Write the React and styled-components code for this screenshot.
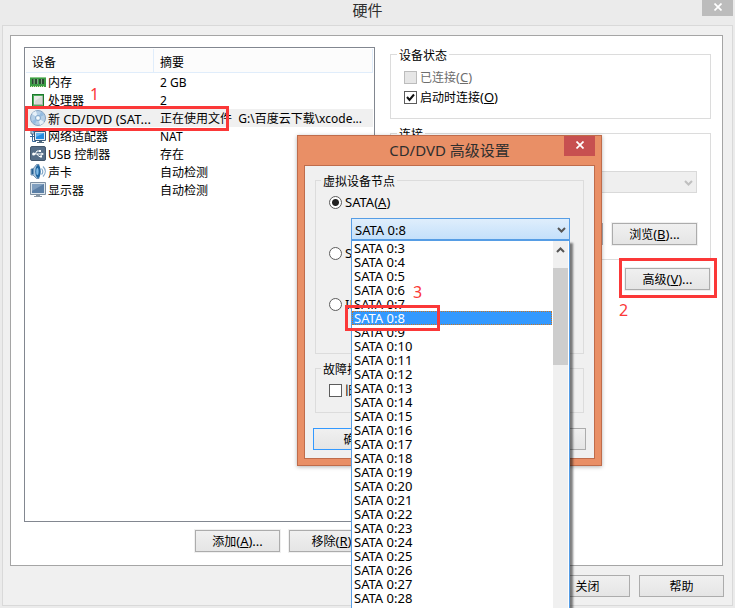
import React from "react";
import styled, { createGlobalStyle, css } from "styled-components";

const Global = createGlobalStyle`
  * { box-sizing: border-box; }
  html, body { margin: 0; background: #ebebeb; }
  body, button, input, select {
    font-family: "Noto Sans", "Noto Sans CJK SC", sans-serif;
    font-size: 12px;
    line-height: 16px;
    color: #000;
  }
`;

const Window = styled.main`
  position: relative;
  display: flex;
  flex-direction: column;
  height: 100vh;
  min-height: 560px;
  padding: 0 2px 2px;
  overflow: hidden;
  background: #ebebeb;
`;

const TitleBar = styled.header`
  position: relative;
  flex: none;
  display: flex;
  justify-content: center;
  height: ${(p) => (p.$accent ? 29 : 25)}px;

  h1, h2 {
    margin: 0;
    font-size: 15px;
    font-weight: 400;
    line-height: ${(p) => (p.$accent ? 29 : 21)}px;
    color: #2e2e2e;
  }
`;

const CloseButton = styled.button`
  position: absolute;
  top: 0;
  right: 0;
  display: flex;
  align-items: center;
  justify-content: center;
  width: 31px;
  height: ${(p) => (p.$accent ? 20 : 16)}px;
  padding: 0 0 2px;
  border: 0;
  background: ${(p) => (p.$accent ? "#c75050" : "#bcbcbc")};
`;

const Client = styled.div`
  flex: 1;
  display: flex;
  flex-direction: column;
  padding: 9px 8px 8px 7px;
  border: 1px solid #d9d9d9;
  background: #f0f0f0;
`;

const Panel = styled.section`
  flex: 1;
  display: grid;
  grid-template-columns: minmax(0, 351fr) minmax(0, 321fr);
  gap: 15px;
  margin-right: 1px;
  padding: 11px 11px 13px 13px;
  border: 1px solid #a5a5a5;
  background: #fff;
`;

const Column = styled.div`
  display: flex;
  flex-direction: column;
  min-width: 0;
`;

const DeviceList = styled.div`
  flex: 1;
  padding: 1px;
  border: 1px solid #828790;
  background: #fff;
`;

const DeviceTable = styled.table`
  width: 100%;
  table-layout: fixed;
  border-collapse: separate;
  border-spacing: 0;

  th {
    height: 24px;
    padding: 4px 6px 0;
    border-bottom: 1px solid #e0edfb;
    border-right: 1px solid #e0edfb;
    background: #fcfcfc;
    text-align: left;
    font-weight: 400;
  }
  th:first-child { width: 128px; }
  td {
    height: 18px;
    padding: 2px 0 0 6px;
    line-height: 16px;
    white-space: pre;
  }
  td:first-child { padding: 0 0 0 4px; }
`;

const DeviceRow = styled.tr`
  background: ${(p) => (p.$selected ? "#f0f0f0" : "transparent")};
`;

const DeviceName = styled.span`
  display: flex;
  gap: 2px;
  height: 18px;
  line-height: 20px;

  svg {
    flex: none;
    margin-top: 1px;
  }
`;

const Latin = styled.span`
  font-size: 13px;
`;

const ButtonRow = styled.div`
  flex: none;
  display: flex;
  justify-content: flex-end;
  gap: 9px;
  padding: ${(p) => p.$pad || "9px 0 0"};
`;

const Button = styled.button`
  flex: none;
  width: 85px;
  height: 22px;
  padding: 1px 0 0;
  border: 1px solid ${(p) => (p.$primary ? "#3399ff" : "#acacac")};
  background: linear-gradient(#f0f0f0, #e5e5e5);
  box-shadow: 0 0 0 1px #f0f0f0;
  line-height: 19px;
  white-space: nowrap;
`;

const Group = styled.fieldset`
  min-width: 0;
  margin: 0 ${(p) => p.$inset || 0}px ${(p) => p.$gap || 0}px;
  padding: 0;
  border: 1px solid #dcdcdc;

  legend {
    margin-left: ${(p) => (p.$inset ? 5 : 6)}px;
    padding: 2px 2px 0;
    line-height: 14px;
    height: 14px;
  }
`;

const GroupBody = styled.div`
  padding: ${(p) => p.$pad};
`;

const Option = styled.label`
  display: flex;
  align-items: center;
  gap: 3px;
  height: ${(p) => p.$height || 16}px;
  color: ${(p) => (p.$disabled ? "#6d6d6d" : "#000")};
  white-space: nowrap;
`;

const mark = css`
  appearance: none;
  flex: none;
  width: 13px;
  height: 13px;
  margin: 0;
  border: 1px solid #5c5c5c;
  background: #fff;
`;

const tick =
  "url(\"data:image/svg+xml,%3Csvg xmlns='http://www.w3.org/2000/svg' viewBox='0 0 11 11'%3E%3Cpath d='M2 5l2.5 3L9 2.5' fill='none' stroke='%23111' stroke-width='2'/%3E%3C/svg%3E\")";

const Check = styled.input.attrs({ type: "checkbox" })`
  ${mark}
  &:checked { background: #fff ${tick}; }
  &:disabled { border-color: #bcbcbc; background: #e6e6e6; }
`;

const Radio = styled.input.attrs({ type: "radio" })`
  ${mark}
  border-radius: 50%;
  &:checked { background: radial-gradient(circle, #222 0 3px, #fff 4px); }
`;

const ComboBox = styled.div`
  position: relative;
  height: 22px;
  margin: ${(p) => p.$margin || 0};

  select {
    appearance: none;
    display: block;
    width: 100%;
    height: 22px;
    padding: 1px 3px 0;
    border: 1px solid ${(p) => (p.$open ? "#569de5" : "#d9d9d9")};
    border-radius: 0;
    background: ${(p) => (p.$open ? "linear-gradient(#dfeefc, #c4e0fb)" : "#efefef")};
    color: #000;
    font-size: 13px;
    opacity: 1;
  }
  > svg {
    position: absolute;
    right: 4px;
    top: 9px;
    pointer-events: none;
  }
`;

const FileRow = styled.div`
  display: flex;
  gap: 9px;
  margin-top: 30px;
`;

const PathInput = styled.input`
  flex: 1;
  min-width: 0;
  height: 22px;
  border: 1px solid #abadb3;
  background: #fff;
`;

const Dialog = styled.section`
  position: absolute;
  top: 135px;
  left: 297px;
  width: 305px;
  padding: 0 6px 6px;
  border: 1px solid #bf6c4b;
  background: #e98f66;
  box-shadow: 0 1px 4px rgba(0, 0, 0, 0.3);
`;

const DialogBody = styled.div`
  padding: 7px 8px 8px;
  border: 1px solid #bf6c4b;
  background: #f0f0f0;
`;

const DropDown = styled.div`
  position: absolute;
  z-index: 1;
  top: 22px;
  left: 0;
  right: 0;
  display: flex;
  border: 1px solid #569de5;
  background: #fff;
  box-shadow: 3px 3px 2px rgba(0, 0, 0, 0.5);
`;

const Choices = styled.ul`
  flex: 1;
  margin: 0;
  padding: 0 1px 30px 0;
  list-style: none;
`;

const Choice = styled.li`
  height: 14px;
  padding-left: 2px;
  font-size: 13px;
  line-height: 15px;
  ${(p) =>
    p.$active &&
    css`
      background: #3399ff;
      color: #fff;
      outline: 1px dotted #c77526;
      outline-offset: -1px;
    `}
`;

const ScrollTrack = styled.div`
  display: flex;
  flex-direction: column;
  align-items: center;
  width: 15px;
  margin-right: 1px;
  padding-top: 6px;
  background: #f0f0f0;
`;

const ScrollThumb = styled.div`
  width: 100%;
  height: 97px;
  margin-top: 15px;
  background: #cdcdcd;
`;

const Highlight = styled.div`
  position: absolute;
  z-index: 2;
  top: ${(p) => p.$top}px;
  left: ${(p) => p.$left}px;
  width: ${(p) => p.$width}px;
  height: ${(p) => p.$height}px;
  border: 3px solid #fb3838;
  pointer-events: none;
`;

const StepNumber = styled.span`
  position: absolute;
  z-index: 2;
  top: ${(p) => p.$top}px;
  left: ${(p) => p.$left}px;
  font-size: 16px;
  line-height: 20px;
  color: #fb3838;
`;

const Cross = () => (
  <svg width="8" height="8" viewBox="0 0 8 8" aria-hidden="true">
    <path d="M.5.5l7 7M7.5.5l-7 7" stroke="#fff" strokeWidth="1.7" />
  </svg>
);

const Chevron = ({ up, color = "#555" }) => (
  <svg width="9" height="6" viewBox="0 0 9 6" aria-hidden="true">
    <path d={up ? "M1 5l3.5-3.5L8 5" : "M1 1l3.5 3.5L8 1"} fill="none" stroke={color} strokeWidth="2" />
  </svg>
);

const Icon = ({ children }) => (
  <svg width="16" height="16" viewBox="0 0 16 16" aria-hidden="true">
    {children}
  </svg>
);

const MemoryIcon = () => (
  <Icon>
    <path d="M0 3h16v10H0z" fill="#3c9d45" />
    <path d="M0 3h16v1H0z" fill="#8cc98c" />
    <path d="M2 5h2v5H2zM5 5h2v5H5zM9 5h2v5H9zM12 5h2v5h-2z" fill="#2c4a33" />
    <path d="M4 5v5M7.500 5v5M11.500 5v5" stroke="#82a585" />
    <path d="M1 12.500h14" stroke="#d5e8a8" strokeDasharray="1 1" />
  </Icon>
);

const CpuIcon = () => (
  <Icon>
    <path d="M2 2h12v13H2z" fill="#1d7a2e" />
    <path d="M3 3h10v11H3z" fill="#4fae5c" />
    <path d="M4 4h9v9H4z" fill="#a9b8ab" />
    <path d="M4 4h8v8H4z" fill="#e9ece9" />
    <path d="M5 9l7-5v8H5z" fill="#d6dbd6" />
  </Icon>
);

const DiscIcon = () => (
  <Icon>
    <circle cx="8" cy="8" r="7.5" fill="#b5cfe7" stroke="#86a2c0" />
    <path d="M8 8L2 4a7 7 0 0 1 4-3zM8 8l6 4a7 7 0 0 1-4 3z" fill="#e6f0f9" />
    <path d="M8 8l3-6a7 7 0 0 1 3 3zM8 8l-3 6a7 7 0 0 1-3-3z" fill="#94bbe0" />
    <circle cx="8" cy="8" r="2.6" fill="#dce9f4" stroke="#86a9cc" />
    <circle cx="8" cy="8" r="1" fill="#fff" />
  </Icon>
);

const NetworkIcon = () => (
  <Icon>
    <path d="M1 1h8v5H1z" fill="#dce7f0" stroke="#47627e" />
    <path d="M2.500 2.500h5v2h-5z" fill="#3b83c4" />
    <path d="M2.500 6v7.500H6M0 8.500h5" fill="none" stroke="#37679a" />
    <path d="M4.500 3.500h11v9h-11z" fill="#e2ecf5" stroke="#3c5876" />
    <path d="M6 5h8v6H6z" fill="#258ce0" />
    <path d="M6 5h8L6 9z" fill="#66b5f0" />
    <path d="M9 13h3v1h2v1H7v-1h2z" fill="#526a80" />
  </Icon>
);

const UsbIcon = () => (
  <Icon>
    <rect x=".5" y=".5" width="15" height="14" rx="1.5" fill="#566d87" stroke="#43566c" />
    <path d="M3 8h9M5 8l2-3h3M7 8l2 2.500h2" fill="none" stroke="#fff" />
    <circle cx="3.600" cy="8" r="1.500" fill="#fff" />
    <path d="M11.500 6.500L14 8l-2.500 1.500zM9 4h2v2H9zM10 9.500h2v2h-2z" fill="#fff" />
  </Icon>
);

const SoundIcon = () => (
  <Icon>
    <path d="M1 5h2l3.500-4.500H9v14H6.500L3 11H1z" fill="#a9c6df" stroke="#577b9f" strokeWidth=".8" />
    <ellipse cx="8" cy="7.500" rx="2.700" ry="6.500" fill="#1f659f" />
    <ellipse cx="7.400" cy="7.500" rx="1.200" ry="3.500" fill="#82bce8" />
    <path d="M3.500 4.500v6L1.500 10V5z" fill="#275f92" />
    <path d="M11.500 4.500c1.500 2 1.500 4.500 0 6M13 2.500c3 3 3 7 0 10" fill="none" stroke="#85a9ca" strokeWidth="1.200" />
  </Icon>
);

const DisplayIcon = () => (
  <Icon>
    <path d="M.5.5h15v12H.5z" fill="#dce5ec" stroke="#7d8fa1" />
    <path d="M2 2h12v9H2z" fill="#5b7fa6" />
    <path d="M2 2h12L2 9z" fill="#809fbf" />
    <path d="M6 13h4v1h2v1H4v-1h2z" fill="#8796a4" />
  </Icon>
);

const devices = [
  { icon: MemoryIcon, name: "内存", summary: "2 GB" },
  { icon: CpuIcon, name: "处理器", summary: "2" },
  {
    icon: DiscIcon,
    name: "新 ",
    model: "CD/DVD (SAT...",
    summary: "正在使用文件  G:\\百度云下载\\xcode...",
    selected: true,
  },
  { icon: NetworkIcon, name: "网络适配器", summary: "NAT" },
  { icon: UsbIcon, name: "USB 控制器", summary: "存在" },
  { icon: SoundIcon, name: "声卡", summary: "自动检测" },
  { icon: DisplayIcon, name: "显示器", summary: "自动检测" },
];

const nodes = Array.from({ length: 26 }, (_, i) => `SATA 0:${i + 3}`);

const Key = ({ text, letter, more = "" }) => (
  <span>
    {text}
    <Latin>
      (<u>{letter}</u>){more}
    </Latin>
  </span>
);

const BusKey = ({ text, letter }) => (
  <Latin>
    {text}(<u>{letter}</u>)
  </Latin>
);

function AdvancedDialog() {
  return (
    <Dialog role="dialog" aria-labelledby="advanced-title">
      <TitleBar $accent>
        <h2 id="advanced-title">CD/DVD 高级设置</h2>
        <CloseButton $accent type="button" aria-label="关闭">
          <Cross />
        </CloseButton>
      </TitleBar>
      <DialogBody>
        <Group $inset={2} $gap={7}>
          <legend>虚拟设备节点</legend>
          <GroupBody $pad="7px 13px 11px">
            <Option>
              <Radio name="bus" defaultChecked />
              <BusKey text="SATA" letter="A" />
            </Option>
            <ComboBox $open $margin="8px 0 5px 22px">
              <select aria-label="SATA" defaultValue="SATA 0:8">
                {nodes.map((n) => (
                  <option key={n}>{n}</option>
                ))}
              </select>
              <Chevron />
              <DropDown>
                <Choices role="listbox" aria-label="SATA">
                  {nodes.map((n) => (
                    <Choice key={n} role="option" aria-selected={n === "SATA 0:8"} $active={n === "SATA 0:8"}>
                      {n}
                    </Choice>
                  ))}
                </Choices>
                <ScrollTrack>
                  <Chevron up />
                  <ScrollThumb />
                </ScrollTrack>
              </DropDown>
            </ComboBox>
            <Option>
              <Radio name="bus" />
              <BusKey text="SCSI" letter="S" />
            </Option>
            <ComboBox $margin="8px 0 5px 22px">
              <select aria-label="SCSI" disabled />
            </ComboBox>
            <Option>
              <Radio name="bus" />
              <BusKey text="IDE" letter="I" />
            </Option>
            <ComboBox $margin="8px 0 0 22px">
              <select aria-label="IDE" disabled />
            </ComboBox>
          </GroupBody>
        </Group>
        <Group $inset={2}>
          <legend>故障排除</legend>
          <GroupBody $pad="7px 13px 14px">
            <Option>
              <Check />
              <Key text="旧版仿真" letter="L" />
            </Option>
          </GroupBody>
        </Group>
        <ButtonRow $pad="15px 0 0">
          <Button $primary type="button">确定</Button>
          <Button type="button">取消</Button>
          <Button type="button" aria-label="帮助" />
        </ButtonRow>
      </DialogBody>
    </Dialog>
  );
}

export default function App() {
  return (
    <>
      <Global />
      <Window>
        <TitleBar>
          <h1>硬件</h1>
          <CloseButton type="button" aria-label="关闭">
            <Cross />
          </CloseButton>
        </TitleBar>
        <Client>
          <Panel>
            <Column>
              <DeviceList>
                <DeviceTable>
                  <thead>
                    <tr>
                      <th scope="col">设备</th>
                      <th scope="col">摘要</th>
                    </tr>
                  </thead>
                  <tbody>
                    {devices.map(({ icon: Glyph, name, model, summary, selected }) => (
                      <DeviceRow key={name} $selected={selected}>
                        <td>
                          <DeviceName>
                            <Glyph />
                            <span>
                              {name}
                              {model && <Latin>{model}</Latin>}
                            </span>
                          </DeviceName>
                        </td>
                        <td>{summary}</td>
                      </DeviceRow>
                    ))}
                  </tbody>
                </DeviceTable>
              </DeviceList>
              <ButtonRow $pad="8px 1px 0 0">
                <Button type="button">
                  <Key text="添加" letter="A" more="..." />
                </Button>
                <Button type="button">
                  <Key text="移除" letter="R" />
                </Button>
              </ButtonRow>
            </Column>
            <Column>
              <Group $gap={7}>
                <legend>设备状态</legend>
                <GroupBody $pad="6px 13px 11px">
                  <Option $disabled $height={20}>
                    <Check disabled />
                    <Key text="已连接" letter="C" />
                  </Option>
                  <Option $height={20}>
                    <Check defaultChecked />
                    <Key text="启动时连接" letter="O" />
                  </Option>
                </GroupBody>
              </Group>
              <Group $gap={8}>
                <legend>连接</legend>
                <GroupBody $pad="31px 13px 14px 36px">
                  <ComboBox>
                    <select aria-label="物理驱动器" disabled />
                    <Chevron color="#bfbfbf" />
                  </ComboBox>
                  <FileRow>
                    <PathInput aria-label="映像文件" />
                    <Button type="button">
                      <Key text="浏览" letter="B" more="..." />
                    </Button>
                  </FileRow>
                </GroupBody>
              </Group>
              <ButtonRow $pad="0 1px 0 0">
                <Button type="button">
                  <Key text="高级" letter="V" more="..." />
                </Button>
              </ButtonRow>
            </Column>
          </Panel>
          <ButtonRow>
            <Button type="button">关闭</Button>
            <Button type="button">帮助</Button>
          </ButtonRow>
        </Client>
        <AdvancedDialog />
        <Highlight $left={25} $top={106} $width={204} $height={25} />
        <Highlight $left={619} $top={258} $width={98} $height={40} />
        <Highlight $left={345} $top={305} $width={95} $height={26} />
        <StepNumber $left={90} $top={84}>1</StepNumber>
        <StepNumber $left={619} $top={300}>2</StepNumber>
        <StepNumber $left={413} $top={282}>3</StepNumber>
      </Window>
    </>
  );
}
